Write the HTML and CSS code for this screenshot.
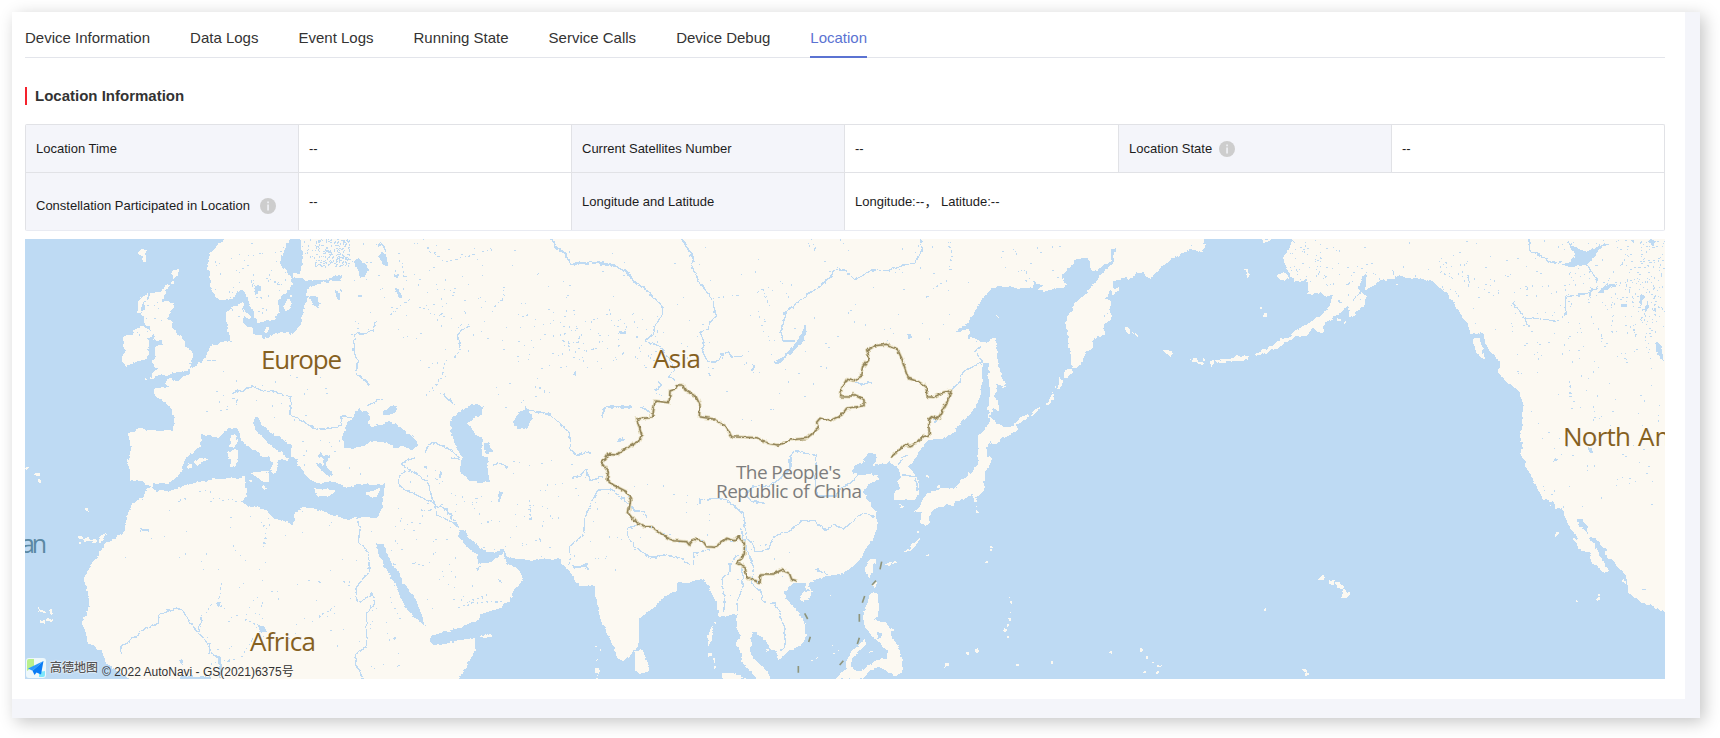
FILE: index.html
```html
<!DOCTYPE html>
<html lang="en">
<head>
<meta charset="utf-8">
<title>Device Location</title>
<link rel="stylesheet" href="styles.css">
</head>
<body>
<div class="frame">
<main class="panel">
  <nav class="tabs">
    <a class="tab">Device Information</a>
    <a class="tab">Data Logs</a>
    <a class="tab">Event Logs</a>
    <a class="tab">Running State</a>
    <a class="tab">Service Calls</a>
    <a class="tab">Device Debug</a>
    <a class="tab active">Location</a>
  </nav>
  <h2 class="title">Location Information</h2>
  <div class="info">
    <div class="cell label">Location Time</div>
    <div class="cell">--</div>
    <div class="cell label">Current Satellites Number</div>
    <div class="cell">--</div>
    <div class="cell label">Location State
      <svg class="tip near" viewBox="0 0 16 16"><circle cx="8" cy="8" r="8"/><path d="M7.3 3.6h1.5v1.6H7.3zM7.3 6.4h1.5v6H7.3z"/></svg>
    </div>
    <div class="cell last">--</div>
    <div class="cell label low">Constellation Participated in Location
      <svg class="tip far" viewBox="0 0 16 16"><circle cx="8" cy="8" r="8"/><path d="M7.3 3.6h1.5v1.6H7.3zM7.3 6.4h1.5v6H7.3z"/></svg>
    </div>
    <div class="cell">--</div>
    <div class="cell label">Longitude and Latitude</div>
    <div class="cell wide last">Longitude:--， Latitude:--</div>
  </div>
  <div class="map">
  <svg class="world" viewBox="25 239 1640 440" width="1640" height="440">
    <defs>
      <filter id="rough" filterUnits="userSpaceOnUse" x="15" y="230" width="1660" height="460" color-interpolation-filters="sRGB">
        <feTurbulence type="fractalNoise" baseFrequency="0.2" numOctaves="2" seed="4"/>
        <feDisplacementMap in="SourceGraphic" scale="4" xChannelSelector="R" yChannelSelector="G"/>
      </filter>
    </defs>
    <g filter="url(#rough)">
    <path class="water" d="M15 230H1675V690H15Z"/>
    <path class="land" d="M224 230H290V239H224ZM299 230H1204V239H299ZM1292 230H1675V611H1665V239H1292ZM130 679H177V690H130ZM211 679H458V690H211Z"/>
    <!-- north-west Europe -->
    <svg x="20" y="235" width="320" height="222" viewBox="0 0 960 666">
      <g class="land">
      <path d="M612 12L598 22 590 32 575 48 568 62 562 78 563 100 570 112 570 150 578 165 585 182 600 195 618 197 632 192 645 182 655 170 668 163 678 175 680 190 690 210 697 228 705 245 710 262 730 262 738 258 765 255 772 240 778 225 775 205 780 185 795 175 808 165 815 150 816 130 805 118 800 105 785 98 783 80 790 55 800 30 815 12Z"/>
      <path d="M838 12L845 30 848 70 843 100 838 115 818 112 815 122 830 130 860 135 905 137 935 128 965 118 978 125 978 138 950 138 915 140 895 150 875 155 860 165 858 182 868 185 855 205 850 225 845 245 842 270 825 290 812 300 800 290 785 290 765 295 745 308 730 312 722 300 705 300 695 290 700 282 680 275 668 262 672 240 680 250 695 253 690 240 680 232 668 220 672 203 660 205 640 215 620 235 625 290 632 318 600 325 570 335 560 360 545 380 525 395 512 400 508 418 490 425 475 440 455 432 440 432 437 448 450 457 420 456 400 462 405 485 425 495 445 510 458 525 462 550 460 585 430 588 385 585 350 580 345 590 325 598 333 640 322 690H485L495 672 515 655 540 632 545 600 565 600 595 605 610 595 630 578 645 578 658 590 660 610 680 630 710 650 735 670 745 690H795L805 675 790 655 765 640 745 625 725 605 705 580 700 560 705 545 715 548 725 570 750 592 770 602 800 620 815 632 812 655 815 690H1000V12Z"/>
      <path d="M395 172L420 172 440 148 448 150 435 175 428 200 458 205 458 220 447 240 445 250 455 262 463 285 480 300 492 320 500 340 518 350 520 365 512 380 510 400 490 410 455 412 445 425 425 418 405 425 388 432 400 410 415 402 395 385 393 375 408 370 405 345 412 332 430 330 425 315 410 318 400 310 405 300 395 295 390 278 375 270 372 245 362 238 375 225 372 205 385 190Z"/>
      <path d="M360 190L382 175 380 195 365 205 362 235 352 235 355 205ZM335 300L345 282 370 275 390 285 398 300 382 312 388 330 380 372 350 380 320 392 305 378 305 365 318 348 308 338 308 305ZM455 115L470 97 477 100 472 125 462 135ZM352 55L365 42 380 45 376 82 368 82 365 65ZM790 215L805 192 818 195 810 220 798 230ZM735 277h12v14h-12zM632 602L645 598 652 620 645 640 630 635ZM622 650L655 640V690H628ZM540 672h20v10h-38zM453 141h6v6h-6zM374 430h6v6h-6zM810 180h8v6h-8z"/>
      </g>
      <g class="water">
      <path d="M870 188L885 182 900 205 890 222 878 205ZM700 170L712 150 725 155 722 168 708 178ZM945 165h12l4 30h-8zM965 600L975 570 990 560V640L972 628ZM875 672l18-8 8-12 10 10 15-2v20l-20 8-30-2z"/>
      </g>
      <path class="river" d="M640 475L655 467 675 465 695 452 730 470 765 467 785 480 812 485 810 540 850 558 880 580 920 583 965 570 967 545 990 543M638 488L652 492 650 510M690 125L700 160M565 376h25M765 140l15 10M960 195l-4-25"/>
    </svg>
    <!-- Russia west, Black Sea, Caspian -->
    <svg x="340" y="235" width="310" height="222" viewBox="30 0 930 666">
      <path class="land" d="M0 0H990V690H0Z"/>
      <g class="water">
      <path d="M48 575L68 545 88 520 105 530 122 545 115 565 125 575 150 570 175 558 198 565 215 580 240 598 262 620 262 635 245 643 215 635 190 635 170 622 120 620 100 635 85 640 45 638 35 610ZM160 530L180 518 200 512 198 532 175 540 160 540ZM360 565L370 545 390 528 425 508 458 512 455 540 430 545 428 555 410 565 425 580 440 605 455 610 455 660 460 690H398L395 665 380 640 368 605ZM460 625L475 622 490 650 465 655ZM550 560L565 535 590 520 605 540 608 555 590 580 565 582 552 575ZM70 78L85 70 105 85 117 105 105 122 90 125 82 100ZM145 65L155 48 168 60 175 92 165 92ZM193 158L205 162 220 188 210 190ZM192 117h12v9h-12zM18 163h14l-2 30h-8zM862 614l20-5 5 6-20 6zM865 290l22-4-4 12h-12zM85 180h10v8h-10zM728 415l10-8 0 16z"/>
      </g>
      <path class="river" d="M145 30l12-4 8 20M0 130l20 10 15-18M0 578L35 570 36 542 62 545M135 262L128 288 100 297 75 298 72 350 82 375 80 415 120 450M420 274L395 282 382 305 392 340M285 650L305 622 335 632 370 650 395 670M213 690L225 680 265 668M600 525L660 538 700 575 720 600 722 645 740 662 780 650M990 255L970 290 945 318 965 330 990 332M108 515l35-22 15 0M585 515l15 15M340 475l35 38M985 440l-10 30"/>
      <path class="river dotted" d="M392 340L375 370 345 380 335 425 310 460 280 488M290 210l8 25 60 12 40 28M215 80l8 40 10 25M520 150l0 35-35 42M180 240l60-50M615 455l45 20M770 345l30-5 10 20M700 320l60 5M290 40l60 40 60-15 80-25"/>
      <path class="river bold" d="M663 12L680 38 705 55 725 88 780 82 850 90 890 110 912 140 950 165 990 208M815 550L818 525 835 515 905 515M935 515l25 20"/>
      <path class="halo" d="M990 505L978 497 962 540 968 547 920 552 935 600 925 620 885 642 860 660 830 658 812 690"/>
      <path class="border" d="M990 505L978 497 962 540 968 547 920 552 935 600 925 620 885 642 860 660 830 658 812 690"/>
    </svg>
    <!-- Siberia, Mongolia, north-east China -->
    <svg x="650" y="235" width="340" height="222" viewBox="30 0 1020 666">
      <path class="land" d="M0 0H1080V690H0Z"/>
      <path class="water" d="M1080 152L1065 155 1030 190 1000 235 985 260 945 290 955 295 985 280 990 295 982 312 1010 308 1020 320 1055 325 1058 308 1070 310 1080 340ZM1030 385H1048L1045 420 1050 470 1045 520 1050 560 1030 590 1015 600 1010 690H808L830 660 848 635 865 615 915 610 945 590 965 560 985 545 1010 510 1022 480 1028 440 1025 410ZM1050 625L1040 640 1045 690H1080V615ZM497 265L500 290 490 320 465 345 435 370 420 385 398 382 430 365 450 345 470 320 485 295ZM660 690L685 655 710 655 705 680 700 690ZM337 388l6 2-2 22-4-6zM202 415l10-6 2 12-8 6zM805 298h8v14h-8zM880 552l10-2 0 10h-8z"/>
      <path class="river" d="M125 12L160 70 157 95 180 145 215 190 228 240 210 260 200 285 180 292 192 320 188 350 205 382 235 380 245 360 265 350 275 365 310 365M0 150L30 175 65 210 68 235 45 275 38 298 15 318 55 332 70 345M842 12L846 50 825 82 780 92 745 107 695 105 645 135 615 105 590 100 570 125 540 155 500 180 470 205 435 232 430 270 420 295 430 318 465 318M935 465L960 440 970 410 1000 395 1028 380 1005 350 1022 335M450 690V665L465 650 500 655 530 662 528 690M640 440L670 448 697 440M800 660l-25 22M70 345l20 30 15 30-20 20 20 10M55 435l10 20-20 10 20 20"/>
      <path class="river dotted" d="M220 190l80-10M340 175l30-12 10 30 10 30M360 245l20 10-15 18M385 300l5 25M925 20l12 40-8 50M930 130l-50 30M515 12l12 40M600 12l30 40"/>
      <path class="river bold" d="M0 515L28 532M125 12L160 70"/>
      <path class="halo" d="M0 548L38 545 45 498 88 503 90 468 105 463 110 450 128 450 135 465 168 485 180 510 178 545 220 552 255 572 275 605 350 608 385 625 415 630 450 615 500 610 535 580 530 562 540 550 570 557 605 540 620 520 672 512 672 495 640 478 635 486 602 485 605 460 620 433 640 437 662 425 668 395 688 370 680 348 705 332 740 328 772 342 785 370 805 430 835 440 858 455 862 485 880 487 910 472 933 467 922 500 905 530 895 552 878 545 866 555 868 600 850 605 835 620 812 632 795 630 770 652 750 668"/>
      <path class="border" d="M0 548L38 545 45 498 88 503 90 468 105 463 110 450 128 450 135 465 168 485 180 510 178 545 220 552 255 572 275 605 350 608 385 625 415 630 450 615 500 610 535 580 530 562 540 550 570 557 605 540 620 520 672 512 672 495 640 478 635 486 602 485 605 460 620 433 640 437 662 425 668 395 688 370 680 348 705 332 740 328 772 342 785 370 805 430 835 440 858 455 862 485 880 487 910 472 933 467 922 500 905 530 895 552 878 545 866 555 868 600 850 605 835 620 812 632 795 630 770 652 750 668"/>
    </svg>
    <!-- Kamchatka, Aleutians -->
    <svg x="990" y="235" width="340" height="222" viewBox="30 0 1020 666">
      <g class="land">
      <path d="M0 12H672L675 40 660 50 630 42 590 65 545 95 522 118 515 132 500 125 490 112 470 115 445 135 435 125 420 135 400 138 398 160 420 155 415 168 398 182 392 165 378 190 395 200 388 225 396 240 392 258 375 262 370 280 375 300 350 305 338 320 340 342 318 350 310 375 290 400 275 400 272 360 265 320 258 270 265 235 280 220 282 200 305 190 330 160 345 142 370 110 390 95 400 85 402 55 410 38 397 38 392 80 375 85 350 108 335 108 330 85 325 68 290 72 270 95 245 125 258 145 255 158 225 160 195 170 172 162 190 152 160 142 155 160 100 157 50 153 30 165 10 195 0 208Z"/>
      <path d="M0 310L15 325 30 328 32 308 48 308 52 370 62 410 77 455 75 465 62 450 48 450 45 485 58 515 55 530 40 518 30 540 25 520 25 460 28 410 20 385 5 390 0 470ZM10 545L25 540 45 560 70 575 100 570 125 545 148 540 145 548 110 570 115 582 90 600 65 608 50 628 20 618 0 620V590L18 590ZM0 625H18L25 650 33 660V690H0Z"/>
      <path d="M255 402H275L278 408 262 430 252 428ZM238 430l12 8-12 25h-8l8-18ZM218 472l6 15-18 25-10-2 15-20ZM182 512l-4 8-18 22h-8l12-18ZM222 453h6v6h-6zM50 243h6v6h-6zM432 275h15l5 22h-8zM460 290l16 12-4 3-12-10zM548 345L565 345 580 355 570 365 562 358ZM628 375L640 368 670 385V392L650 382ZM668 372h8v6h-8zM690 380L700 377 695 398ZM705 375L760 370 770 362 812 362 800 374 745 382 708 385ZM888 122L910 110 928 125 915 140 895 130ZM792 102h8l12 15-10 8zM840 216h8v8h-8zM850 235h10v7h-10zM840 12L855 25 872 15V12Z"/>
      <path d="M822 360L850 345 880 330 895 315 935 305 940 290 985 265 1030 235 1055 205 1058 180 1035 185 1025 172 980 178 985 165 982 135 945 138 930 120 912 80 915 55 935 30 938 12H1080V235L1050 255 1035 265 1030 295 1010 290 1000 280 975 305 960 302 920 320 900 335 870 350 830 362Z"/>
      </g>
      <path class="river dotted" d="M630 30l10 8M945 90l10 30 25 5M1020 50l5 30M1040 120v30M110 110l30 0 0 30M385 235l-20 18"/>
    </svg>
    <!-- Alaska, western Canada -->
    <svg x="1330" y="235" width="335" height="222" viewBox="30 0 1005 666">
      <path class="land" d="M0 0H1200V690H0Z"/>
      <path class="water" d="M0 690V298L15 290 12 275 40 250 65 230 95 200 115 175 118 155 130 125 140 112 138 140 135 165 165 150 185 135 218 132 240 120 262 130 300 130 340 142 380 175 405 210 430 250 445 270 450 298 490 295 498 335 525 362 542 395 532 408 548 430 580 455 600 475 610 510V560L602 600 608 640 603 660 615 690ZM0 175L38 180 30 210 0 235ZM745 22L770 40 800 50 850 28 868 28 835 45 825 65 800 90 750 98 728 88 755 80 765 55ZM835 172L860 145 908 152 870 158 850 170ZM960 180l12 0-4 30-8-10zM985 190v30l-12 22 4-35zM985 15l12-3 8 10-8 12zM1010 320l15 15 5 45-10-10-12-30zM905 207h12v8h-12zM935 280l12 2-4 10h-8zM68 148l32-10v5l-20 5zM802 635l14 8 2 10h-8z"/>
      <path class="land" d="M85 210L125 172 140 185 132 215 110 230 105 245 88 245ZM458 308L480 310 488 345 497 375 480 365 458 330ZM228 144h6v6h-6zM52 250h8v10h-8zM70 260h7v6h-7z"/>
      <path class="river" d="M627 12L628 45 670 65 695 85 728 80M800 90L828 130 830 160 790 178 738 185 735 240 715 260 650 250 615 252 600 230 580 205 570 218M615 255L630 278M810 165v20M220 105v20M482 290v15M55 195l12 10M445 120v35M705 675l5 15M1015 540v20"/>
      <path class="river dotted" d="M360 75l25 30M575 260l5 30M880 240l-10 50 20 0M1000 80l0 50M920 60l-20 40M1005 180v60M955 130l20 20M750 440v50M820 515l5 30M360 110l40 20"/>
    </svg>
    <!-- North Africa, Mediterranean -->
    <svg x="0" y="457" width="390" height="222" viewBox="0 21 1170 666">
      <g class="land">
      <path d="M395 0L382 40 392 65 390 92 430 92 440 105 458 112 460 102 505 98 530 85 545 60 550 35 575 0Z"/>
      <path d="M442 110L460 112 465 125 515 122 545 108 600 95 640 88 735 82V100L740 140 725 155 745 168 800 180 820 205 850 212 875 222 885 210 882 190 910 172 940 175 980 190 1045 210 1070 200 1130 205 1145 180 1155 100 1120 105 1080 100 1045 112 1010 100 975 95 950 100 925 85 905 60 890 40 893 25 875 20 872 0H1200V690H390L360 670 320 640 300 600 265 580 255 540 245 515 262 490 268 460 262 420 252 390 270 350 295 315 318 275 350 265 375 240 378 200 400 160 430 140Z"/>
      <path d="M1095 130L1140 116 1130 140 1105 142ZM750 68L805 62 808 100 780 88ZM790 0L820 40 810 62 822 75 832 60 835 30 860 30 865 20 830 0ZM682 0H715L712 48 690 52 688 15ZM580 38l20-14 24 4-14 8-14 8zM565 43h10v10h-10zM235 258h10v8h-10zM235 272h8v8h-8zM250 268L268 258 272 272 252 275ZM275 268h12v10h-12zM295 270L318 248 312 268 300 278ZM250 177l18-5v12zM75 49h12v7h-12zM102 70h18v7h-18zM115 88h8v7h-8zM110 472L138 485 136 490 115 482ZM150 478h6l4 18h-8zM120 510h15v8h-15zM142 506h14v7h-14zM748 90h8v8h-8zM787 106l10 10-4 4-8-6zM765 4h6v6h-6z"/>
      </g>
      <path class="water" d="M1130 280L1150 282 1165 320 1190 350 1200 360V445L1185 430 1180 395 1155 350 1135 310ZM945 40L970 45 965 10 985 20 980 50 1000 72 985 78 965 62ZM765 520L790 530 805 545 785 548ZM530 690L545 678 632 682V690ZM945 98h60v17h-60zM1180 560h6v10h-6zM423 238h22v5h-22zM535 630h14v14h-10zM648 455h12v12h-8z"/>
      <path class="land" d="M942 115L1005 120 990 138 955 138Z"/>
      <path class="river" d="M1070 202L1080 240 1075 275 1105 308 1108 365 1068 410 1070 450 1080 458 1115 432 1125 460 1100 490V590L1068 612V640L1090 687M365 612L362 592 400 565 430 540 475 520 478 490 530 474 545 480 590 545 628 582V608L660 625V687M595 548L605 500M1195 80v30"/>
      <path class="river dotted" d="M605 500L640 460M665 400l-10 60 30 20M710 495l60 30M955 500l50-30M540 150l25-5M640 145l60 5M600 125l30 0M780 215l20 20-10 60M630 640l90-15 20-30"/>
    </svg>
    <!-- Arabia, Iran, India -->
    <svg x="390" y="457" width="310" height="222" viewBox="30 21 930 666">
      <path class="land" d="M0 0H990V690H0Z"/>
      <path class="water" d="M245 0H312L325 15V40L327 95 290 98 260 85 240 65 245 30ZM0 280L15 300 30 330 55 365 70 400 100 435 118 475 130 510 135 530 110 505 85 485 60 440 45 400 15 350 0 320ZM235 240L258 240 265 262 290 285 320 305 345 308 370 293 378 315 400 325 450 330 540 325 545 345 570 365 590 400 615 413 643 403 648 460 660 500 680 545 700 590 710 620 728 635 745 620 770 600 778 570V505L820 475 860 435 890 420 897 398 925 398 970 387 990 420V690H235L270 630 285 600V563L240 570 200 580 165 587 150 572V558L190 547 240 533 295 510 305 490 360 475 395 445 400 420 415 410 428 385 425 370 400 350 378 340 370 308 340 330 325 340 295 340 290 312 265 295 240 265ZM355 125h14l-4 10-8 25-4-4 6-18zM575 346l25 2 22-10 6 24-16-8-30 2zM285 140h8v6h-8zM178 62l8 5v20l-8-10zM478 265h6v8h-6zM355 390h12v8h-10zM320 210h6v6h-6zM38 562h10v6h-10zM133 52h10v6h-10z"/>
      <path class="land" d="M765 600L785 602 805 635V660L780 672 765 660ZM295 560L310 558 318 550 338 552 335 560 310 565ZM643 588h5v5h-5zM660 598h5v5h-5zM648 627h5v5h-5zM645 655l10-6 6 20-10 6zM648 681h6v6h-6z"/>
      <path class="river" d="M62 40L80 32 110 22M62 40L78 52 120 80 145 100 160 160 200 180 235 230M75 60L55 85 60 112 100 130 140 150 168 165 170 195 215 215 235 232M565 345L572 320 568 290 610 255 615 205 630 165 655 120 690 118 740 155 765 182 795 185 798 205M780 222L742 235V260L765 290 815 325 850 315 900 322 930 345M990 300L940 308V345M180 0L210 20 240 28M575 85L600 78 618 58 630 92 668 80M540 5L565 8 590 20 630 3M340 45l22-5 20 12M960 163V145L990 150M758 608l12-8M290 358l15-10"/>
      <path class="river dotted" d="M235 470l80-15 60 0M265 455l60-20M100 340l40 10M450 150v70M45 660l20-25M120 180l40 4M10 440l25 20"/>
      <path class="halo" d="M735 0L715 12 700 8 685 15 665 40 685 65 682 88 700 105 740 125 752 150 745 190 765 215 795 230 815 230 860 262 880 272 920 275 928 285 940 268 965 272 980 290 990 292"/>
      <path class="border" d="M735 0L715 12 700 8 685 15 665 40 685 65 682 88 700 105 740 125 752 150 745 190 765 215 795 230 815 230 860 262 880 272 920 275 928 285 940 268 965 272 980 290 990 292"/>
    </svg>
    <!-- China, Japan, south-east Asia -->
    <svg x="700" y="457" width="330" height="222" viewBox="30 21 990 666">
      <g class="land">
      <path d="M0 0H535L520 35 487 50 490 68 525 75 545 70 568 85 535 103 520 120 530 145 545 165 558 190 562 235 550 265 525 300 510 330 480 355 450 372 410 378 380 388 355 398 365 425 345 410 350 398 310 400 285 425 288 445 320 480 345 520 347 565 330 590 300 600 265 630 262 605 240 598 225 570 205 560 200 545 185 548 180 610 205 640 235 670 245 690H200L180 660 158 640 155 610 140 585 150 555 140 535V490L110 500 85 498 80 460 55 410 40 385 0 395Z"/>
      <path d="M562 0L565 12 550 48 600 35 625 60 632 80 622 95 630 115 612 130V150L645 150 675 150 688 125 685 90 668 65 655 50 672 30 690 8 692 0ZM95 670L125 668 150 678 180 690H100ZM330 435L345 422 370 425 355 450 335 452ZM525 355L540 328 557 328 548 365 540 385 528 375Z"/>
      <path d="M540 430L560 430 568 470 565 500 550 510 575 515 600 530 605 560 625 590 637 630 635 665 615 678 590 665 570 650 540 660 515 690H435L470 655 468 635 490 600 525 565V585L495 615 480 640 485 655 510 668 530 650 560 630 590 625V600L560 570 540 550 525 530 518 500 530 465Z"/>
      <path d="M865 0H900L903 40 885 65 882 120 870 135 850 145 845 132 828 148 800 150 790 165 770 165 740 175 725 180 715 220 705 228 690 218 695 190 680 185 668 190 690 170 695 150 720 125 745 120 755 115 800 115 810 90 830 82 850 60 862 40ZM640 305L660 298 665 285 692 262 680 285 655 308ZM585 342L605 337V345H587ZM610 332h10v6h-10zM55 555L70 528 65 570 55 590ZM70 512h7v7h-7zM55 610h7v7h-7zM68 620l8 8-2 8-7-8zM72 650h7v8h-7zM628 163l14 2-6 9h-6zM705 76h8v6h-8zM742 105l12 0 0 8-12 2zM550 400h8v14h-6zM680 243h8v6h-8zM830 65l10 0 0 12-8 0zM850 140l12 12h-10zM858 170h7v5h-7zM860 183h6v5h-6zM711 312h6v6h-6zM900 288h5v5h-5zM900 297h5v5h-5zM885 333h6v6h-6zM957 441h7v7h-7zM961 453h7v8h-7zM958 483h6v7h-6zM956 505h7v9h-7zM943 538h8v7h-8zM950 522h6v8h-6zM828 605h8v7h-8zM855 598h8v7h-8zM766 642h10v8h-10zM538 603h7v7h-7zM583 515h8v8h-8zM603 538h8v8h-8zM232 598h6v5h-6zM981 642h6v6h-6z"/>
      <path d="M418 434h3v3h-3zM390 495h5v3h-5zM425 585h4v3h-4zM445 600h5v3h-5zM425 608h8v3h-8zM362 632h4v4h-4zM378 620h4v4h-4zM412 620h5v3h-5z"/>
      </g>
      <path class="water" d="M205 565l12-6 4 12-10 2zM560 545l12 5 0 12-8 4z"/>
      <path class="river" d="M555 200L520 188 500 205 460 237 430 222 408 242 375 212 335 212 305 240 250 260 235 300 195 305 190 285 170 265 160 190 110 150 80 145 30 150V163M515 65L480 100 455 110 440 138 380 138 375 85 380 22 345 12 320 5 300 20V55L265 90 235 110 190 110 165 130 185 155 225 160M152 235L175 310 190 350 185 400 215 425V455L255 460 270 490 285 540V590L270 600M155 350L160 410 142 450V482M145 315L120 340 120 365 95 385 105 455 100 490M5 345V308L60 300M375 358L405 365 415 380M625 45l15-25M640 75l35 5 10 40"/>
      <path class="halo" d="M0 268L40 275 50 290 75 292 110 265 135 272 145 260 163 280V312L143 340 165 350 170 380 210 400 212 372 250 372 275 360 298 370 305 388 322 393M600 22L615 8 632 0"/>
      <path class="border" d="M0 268L40 275 50 290 75 292 110 265 135 272 145 260 163 280V312L143 340 165 350 170 380 210 400 212 372 250 372 275 360 298 370 305 388 322 393M600 22L615 8 632 0"/>
    </svg>
    <!-- Pacific islands -->
    <path class="land" d="M1007 636h2v2h-2zM1051 660h2v3h-2zM1109 651h3v2h-3zM1140 649h2v2h-2zM1146 657h2v2h-2zM1152 662h2v2h-2zM1158 665h3v2h-3zM1144 671h2v2h-2zM1157 671h2v2h-2z"/>
    <!-- Hawaii, western United States, Mexico -->
    <svg x="1200" y="457" width="465" height="222" viewBox="0 21 1395 666">
      <path class="land" d="M968 0L963 15 975 35V52L995 75 1005 105 1030 148 1062 155 1068 178 1085 172 1092 195 1110 235 1138 268 1118 265 1140 298 1172 312V338L1190 348 1215 372 1225 360 1200 320 1185 285 1168 265 1185 265 1218 300 1220 318 1245 340 1280 380 1285 430 1325 458 1350 465 1395 487V0ZM352 385L363 378H375V388L355 393ZM387 390h15v12h-15zM403 398L430 402 432 415 415 417ZM427 415L450 427V437L437 443H427ZM308 657h14v12h-14zM316 669h10v6h-10zM192 477h6v6h-6zM1065 247h9v11h-9zM1128 450h6v6h-6zM1193 432h6v6h-6zM1191 442h8v8h-8zM1266 388l12 6v8l-6-2zM1050 165h6v6h-6z"/>
      <path class="water" d="M1134 205L1150 208 1165 240V255L1160 242 1138 232ZM1165 0h14v8h-10zM1063 27h8v6h-8zM1326 416h12v4h-12zM1158 45h4v6h-4zM1120 262h10l6 8h-12z"/>
      <path class="land" d="M1117 264h8l6 8h10l-6-10 25 20-20 10z"/>
    </svg>
    </g>
    <svg x="700" y="457" width="330" height="222" viewBox="30 21 990 666">
      <path class="border sea" d="M575 335L570 358M558 392L546 405M524 438L517 458M508 492V515M344 490L353 507M361 560L356 576M508 563L502 582M460 632L449 645M325 648V668"/>
    </svg>
    <g id="lakes" class="lake"></g>
    <g class="continent">
      <text x="261" y="369" textLength="81">Europe</text>
      <text x="653" y="368" textLength="48">Asia</text>
      <text x="250" y="651" textLength="66">Africa</text>
      <text x="1563" y="446" textLength="68">North</text>
      <text x="1638" y="446">Am</text>
    </g>
    <text class="ocean" x="21" y="553" textLength="26">an</text>
    <g class="country">
      <text x="736" y="479" textLength="105">The People's</text>
      <text x="716" y="498" textLength="146">Republic of China</text>
    </g>
  </svg>
  <div class="credit">
    <svg class="logo" viewBox="0 0 20 20"><rect width="20" height="20" rx="3" fill="#eef8fb"/><path d="M3 1h5v7L1 13V3q0-2 2-2z" fill="#b9f08c"/><path d="M13 14l6-1v4q0 2-2 2h-4z" fill="#7fe6fb"/><path d="M17.500 3L2 10.500l4.500 2.300z" fill="#2a9bff"/><path d="M17.500 3L6.500 12.800 8.500 17l2-2.500 4.500 2z" fill="#0a7cf5"/></svg>
    <span class="brand">高德地图</span>
    <span class="copy">© 2022 AutoNavi - GS(2021)6375号</span>
  </div>
  </div>
</main>
</div>
<script src="lakes.js"></script>
</body>
</html>
```
FILE: styles.css
```css
* { box-sizing: border-box; }
body {
  margin: 0;
  padding: 12px 20px 20px 12px;
  background: #fff;
  font-family: "Liberation Sans", "Noto Sans CJK SC", sans-serif;
  color: #333;
}
.frame {
  height: 706px;
  padding: 0 15px 19px 0;
  background: #f4f5fa;
  box-shadow: 4px 4px 16px rgba(0, 0, 0, 0.23);
}
.panel {
  height: 687px;
  padding: 0 20px 0 13px;
  background: #fff;
}
.tabs {
  display: flex;
  gap: 40px;
  height: 46px;
  border-bottom: 1px solid #e3e5eb;
}
.tab {
  height: 46px;
  padding-top: 12px;
  font-size: 15px;
  line-height: 28px;
  white-space: nowrap;
}
.tab.active {
  color: #5b73d2;
  border-bottom: 2px solid #5b73d2;
}
.title {
  margin: 29px 0 0;
  padding-left: 8px;
  height: 18px;
  border-left: 2px solid #f5222d;
  font-size: 15px;
  line-height: 18px;
}
.info {
  display: grid;
  grid-template-columns: 273px 273px 273px 274px 273px 1fr;
  grid-template-rows: 48px 57px;
  margin-top: 19px;
  height: 107px;
  border: 1px solid #e1e2e6;
  border-bottom-color: #e9ebf2;
  border-radius: 2px;
  font-size: 13px;
  color: #1c1c1c;
}
.cell {
  display: flex;
  align-items: center;
  padding: 1px 0 0 10px;
  border-right: 1px solid #e1e2e6;
  border-bottom: 1px solid #e1e2e6;
  line-height: 18px;
  white-space: nowrap;
}
.cell.last { border-right: 0; }
.cell:nth-child(n+7) { border-bottom: 0; }
.label { background: #f4f5fa; }
.label.low { padding-top: 8px; }
.wide { grid-column: span 3; }
.tip { width: 16px; height: 16px; }
.tip circle { fill: #cdcdcd; }
.tip path { fill: #f4f5fa; }
.tip.near { margin: -1px 0 0 7px; }
.tip.far { margin: 1px 0 0 10px; }
.map {
  position: relative;
  margin-top: 8px;
  height: 440px;
  background: #bedaf3;
  overflow: hidden;
}
.world { display: block; }
.land, .water, .river, .lake { shape-rendering: crispEdges; }
.land { fill: #fcf9f2; }
.water, .lake { fill: #bedaf3; }
.river { fill: none; stroke: #bedaf3; stroke-width: 4; }
.river.bold { stroke-width: 6; }
.river.dotted { stroke-width: 3.6; stroke-dasharray: 5 9; }
.halo { fill: none; stroke: #e6dec0; stroke-width: 10; stroke-linejoin: round; }
.border { fill: none; stroke: #94865b; stroke-width: 4.6; stroke-linejoin: round; }
.border.sea { stroke: #8f957c; stroke-width: 5; }
text { font-family: "Open Sans", "Noto Sans", sans-serif; }
.continent { font-size: 26px; fill: #85601f; }
.ocean { font-size: 25px; fill: #5a88a3; }
.country { font-size: 19px; fill: #7d7d7d; }
.credit {
  position: absolute;
  left: 1px;
  bottom: 0;
  display: flex;
  height: 21px;
}
.logo { width: 20px; height: 20px; }
.brand {
  margin-left: 4px;
  font-size: 12px;
  line-height: 21px;
  font-weight: 500;
  color: #555;
  text-shadow: 0 0 2px #fff, 0 0 2px #fff;
}
.copy {
  margin-left: 4px;
  font-size: 12px;
  line-height: 28px;
  height: 21px;
  color: #333;
  white-space: nowrap;
}
```
FILE: lakes.js
```js
// Scatter the small lakes over each region: [x, y, width, height, count]
const regions = [
  [215, 243, 75, 75, 70], [315, 239, 35, 28, 200], [300, 239, 50, 28, 60],
  [350, 239, 130, 100, 70],
  [480, 250, 150, 120, 50], [540, 310, 120, 60, 90], [420, 300, 120, 110, 35],
  [650, 240, 330, 110, 70], [660, 345, 180, 80, 25], [120, 330, 30, 20, 8],
  [140, 280, 25, 45, 14], [200, 370, 130, 50, 25], [1290, 240, 50, 50, 50],
  [1340, 240, 220, 60, 70], [1440, 270, 60, 60, 20], [1560, 240, 105, 70, 110],
  [1625, 240, 40, 100, 110], [1510, 280, 155, 80, 70], [1510, 330, 150, 120, 60],
  [1540, 450, 120, 60, 25],
  [120, 490, 270, 70, 35], [200, 560, 160, 90, 60], [390, 470, 90, 150, 80],
  [470, 460, 130, 100, 60], [590, 480, 120, 90, 30], [730, 540, 60, 60, 15],
  [1000, 240, 60, 40, 15], [350, 600, 50, 70, 15], [265, 440, 110, 35, 18]
];
const group = document.getElementById("lakes");
let seed = 7;
const next = () => (seed = (seed * 16807) % 2147483647) / 2147483647;
let d = "";
for (const [x, y, w, h, count] of regions) {
  for (let i = 0; i < count; i++) {
    const px = Math.floor(x + next() * w);
    const py = Math.floor(y + next() * h);
    const s = next();
    d += `M${px} ${py}h${s > 0.8 ? 2 : 1}v${s < 0.2 ? 2 : 1}h${s > 0.8 ? -2 : -1}z`;
  }
}
const path = document.createElementNS("http://www.w3.org/2000/svg", "path");
path.setAttribute("d", d);
group.appendChild(path);
```
